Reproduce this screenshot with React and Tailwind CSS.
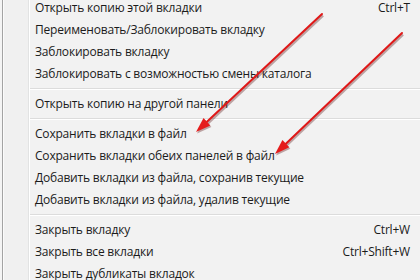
const groups = [
  [
    { label: 'Открыть копию этой вкладки', key: 'Ctrl+T' },
    { label: 'Переименовать/Заблокировать вкладку' },
    { label: 'Заблокировать вкладку' },
    { label: 'Заблокировать с возможностью смены каталога' },
  ],
  [{ label: 'Открыть копию на другой панели' }],
  [
    { label: 'Сохранить вкладки в файл' },
    { label: 'Сохранить вкладки обеих панелей в файл' },
    { label: 'Добавить вкладки из файла, сохранив текущие' },
    { label: 'Добавить вкладки из файла, удалив текущие' },
  ],
  [
    { label: 'Закрыть вкладку', key: 'Ctrl+W' },
    { label: 'Закрыть все вкладки', key: 'Ctrl+Shift+W' },
    { label: 'Закрыть дубликаты вкладок' },
  ],
];

function Arrow({ x1, y1, x2, y2 }) {
  const dx = x2 - x1;
  const dy = y2 - y1;
  const len = Math.hypot(dx, dy);
  const ux = dx / len;
  const uy = dy / len;
  const head = 15;
  const half = 5;
  const bx = x2 - ux * head;
  const by = y2 - uy * head;
  const pts = `${x2},${y2} ${bx - uy * half},${by + ux * half} ${bx + uy * half},${by - ux * half}`;
  return (
    <g>
      <line x1={x1 + 1} y1={y1 + 1.5} x2={bx + 1} y2={by + 1.5} stroke="#5a1010" strokeOpacity="0.35" strokeWidth="2.5" />
      <polygon points={pts} transform="translate(1,1.5)" fill="#5a1010" fillOpacity="0.35" />
      <line x1={x1} y1={y1} x2={bx} y2={by} stroke="#e01818" strokeWidth="2" strokeLinecap="round" />
      <polygon points={pts} fill="#e51c1c" />
    </g>
  );
}

export default function App() {
  return (
    <div
      className="relative w-[420px] h-[280px] overflow-hidden bg-[#f0f0f0] text-[#1b1b1b] flex"
      style={{ fontFamily: '"Open Sans", "Noto Sans", sans-serif' }}
    >
      <div className="w-[2px] bg-[#f4f4f4]" />
      <div className="w-[1px] bg-[#a3a3a3]" />
      <div className="w-[1px] bg-[#fbfbfb]" />
      <div className="w-[25px] bg-[#f0f0f0] border-r border-[#e2e3e3]" />
      <div className="w-[1px] bg-white" />
      <div className="flex-1 mt-[-3px] bg-[#f2f2f2]">
        {groups.map((items, gi) => (
          <div key={gi}>
            {gi > 0 && (
              <div className="h-[8px] flex flex-col justify-center">
                <div className="border-t border-[#dcdcdc] border-b border-b-white" />
              </div>
            )}
            {items.map(item => (
              <div key={item.label} className="h-[22px] flex items-center justify-between pl-[5px] pr-[10px] text-[12px] tracking-[-0.2px]">
                <span>{item.label}</span>
                {item.key && <span>{item.key}</span>}
              </div>
            ))}
          </div>
        ))}
      </div>
      <svg className="absolute inset-0 pointer-events-none" width="420" height="280">
        <Arrow x1={322} y1={14} x2={196} y2={132} />
        <Arrow x1={402} y1={33} x2={275} y2={154} />
      </svg>
    </div>
  );
}
